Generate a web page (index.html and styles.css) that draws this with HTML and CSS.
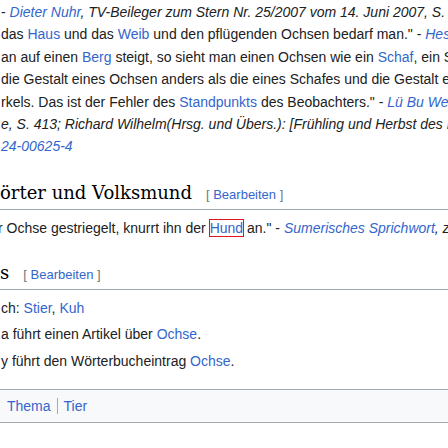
FILE: index.html
```html
<!DOCTYPE html>
<html lang="de">
<head>
<meta charset="utf-8">
<link rel="stylesheet" href="styles.css">
</head>
<body>
<div class="page">
  <div class="quotes">
    <div class="ln">- <i><a href="#">Dieter Nuhr</a>, TV-Beileger zum Stern Nr. 25/2007 vom 14. Juni 2007, S. 12</i></div>
    <div class="ln">das <a href="#">Haus</a> und das <a href="#">Weib</a> und den pflügenden Ochsen bedarf man." - <i><a href="#">Hesiod</a>, Werke und Tage</i></div>
    <div class="ln">an auf einen <a href="#">Berg</a> steigt, so sieht man einen Ochsen wie ein <a href="#">Schaf</a>, ein Schaf wie ein Ferkel</div>
    <div class="ln">die Gestalt eines Ochsen anders als die eines Schafes und die Gestalt eines Schafes anders</div>
    <div class="ln">rkels. Das ist der Fehler des <a href="#">Standpunkts</a> des Beobachters." - <i><a href="#">Lü Bu We</a>, Frühling</i></div>
    <div class="ln"><i>e, S. 413; Richard Wilhelm(Hrsg. und Übers.): [Frühling und Herbst des Lü Bu We]</i></div>
    <div class="ln"><i><a href="#">24-00625-4</a></i></div>
  </div>

  <h2 class="heading">örter und Volksmund<span class="edit"><span class="br">[</span> <a href="#">Bearbeiten</a> <span class="br">]</span></span></h2>
  <div class="ln shift">r Ochse gestriegelt, knurrt ihn der <a href="#" class="hl">Hund</a> an." - <i><a href="#">Sumerisches Sprichwort</a>, zitiert nach</i></div>

  <h2 class="heading second">s<span class="edit"><span class="br">[</span> <a href="#">Bearbeiten</a> <span class="br">]</span></span></h2>
  <div class="ln">ch: <a href="#">Stier</a>, <a href="#">Kuh</a></div>
  <div class="ln sister">a führt einen Artikel über <a href="#">Ochse</a>.</div>
  <div class="ln sister2">y führt den Wörterbucheintrag <a href="#">Ochse</a>.</div>

  <div class="catlinks">
    <ul class="cats">
      <li><a href="#">Thema</a></li>
      <li><a href="#">Tier</a></li>
    </ul>
  </div>
</div>
</body>
</html>
```

FILE: styles.css
```css
html, body {
  margin: 0;
  padding: 0;
  background: #ffffff;
  overflow: hidden;
}
body {
  font-family: "Liberation Sans", Arial, sans-serif;
  font-size: 14px;
  color: #202122;
}
a {
  color: #3366cc;
  text-decoration: none;
}
.page {
  padding-top: 1px;
  width: 448px;
}
.ln {
  white-space: nowrap;
  line-height: 22.4px;
  padding-left: 1px;
}
.ln.shift {
  padding-left: 0;
  margin-left: -2px;
}
.heading {
  font-family: "DejaVu Serif", Georgia, serif;
  font-weight: normal;
  font-size: 18px;
  line-height: 24px;
  margin: 23px 0 7px 0;
  padding: 0 0 2px 0;
  border-bottom: 1px solid #a2a9b1;
  white-space: nowrap;
  color: #000;
}
.heading.second {
  margin-top: 22px;
}
.edit {
  font-family: "Liberation Sans", Arial, sans-serif;
  font-size: 13px;
  margin-left: 14px;
}
.br {
  color: #72777d;
}
.hl {
  outline: 1px solid #e0141e;
}
.sister {
  margin-top: 3px;
}
.sister2 {
  margin-top: 5px;
}
.catlinks {
  margin-top: 17px;
  border-top: 1px solid #a2a9b1;
  border-bottom: 1px solid #a2a9b1;
  background: #f8f9fa;
  padding: 5px 0;
}
.cats {
  list-style: none;
  margin: 0;
  padding: 0 0 0 7px;
  display: flex;
}
.cats li {
  padding: 0 6px;
  border-left: 1px solid #a2a9b1;
  line-height: 16px;
  margin: 3px 0;
}
.cats li:first-child {
  padding-left: 0;
  border-left: none;
}
```
